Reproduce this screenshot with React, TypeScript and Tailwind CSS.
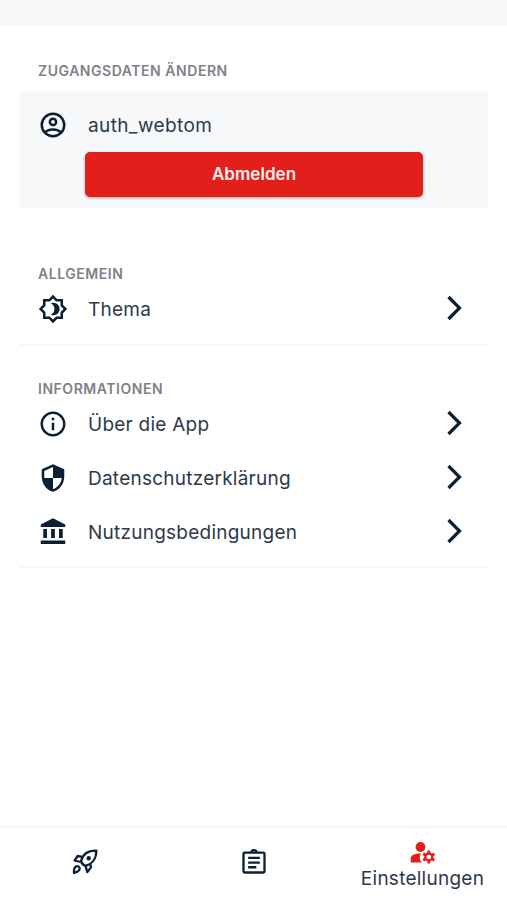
import type { ReactNode } from "react";
import { MdOutlineBrightness4, MdOutlineInfo, MdSecurity } from "react-icons/md";

function AccountIcon() {
  return (
    <svg viewBox="0 0 24 24" className="size-[30px]" fill="none" stroke="currentColor" strokeWidth="2">
      <circle cx="12" cy="12" r="9" />
      <circle cx="12" cy="9.5" r="2.5" />
      <path d="M5.8 18c1-1.6 3.4-2.5 6.2-2.5s5.2.9 6.2 2.5" />
    </svg>
  );
}

function BankIcon() {
  return (
    <svg viewBox="0 0 24 24" className="size-[30px]" fill="currentColor">
      <path d="M12 1 2.2 6v2h19.6V6zM4.200 9.500v7.200h3V9.500zm6.300 0v7.200h3V9.500zm6.300 0v7.200h3V9.500zM2.200 18.700v2.800h19.600v-2.800z" />
    </svg>
  );
}

function ChevronIcon() {
  return (
    <svg viewBox="0 0 17 26" className="h-[26px] w-[17px]" fill="none" stroke="currentColor" strokeWidth="3.200">
      <path d="M2.500 2l11 11-11 11" />
    </svg>
  );
}

function RocketIcon() {
  return (
    <svg viewBox="0 0 26 26" className="size-[26px]" fill="none" stroke="currentColor" strokeWidth="2.300" strokeLinejoin="round">
      <path d="M9 12.2C10.5 6 15.500 1.500 24.300 1.600c.2 8.200-4.500 13.500-10.600 15.300C11.500 16.400 9.800 14.800 9 12.200z" />
      <path d="M10.400 7.800 5.700 7 2.600 11.500 8.700 13M18.400 15.400l.7 2.700-3.800 5-1.800-6.200" />
      <path d="M2 24c-.2-3.200.3-6.500 3-6.800 2.200-.1 3.500 2.200 2.200 4C6.200 22.700 4.300 23.500 2 24z" />
      <circle cx="16.700" cy="9.300" r="2.200" fill="currentColor" stroke="none" />
    </svg>
  );
}

function ClipboardIcon() {
  return (
    <svg viewBox="0 0 24 24" className="size-7" fill="none" stroke="currentColor" strokeWidth="2">
      <rect x="3" y="4" width="18" height="17" rx="1" />
      <path d="M9.800 4a2.200 2.200 0 0 1 4.400 0M7 8.500h10M7 12.500h10M7 16.500h7" />
    </svg>
  );
}

function AccountCogIcon() {
  return (
    <svg viewBox="0 0 26 24" className="h-6 w-[26px]" fill="currentColor">
      <circle cx="10.500" cy="6" r="4.900" />
      <path d="M11 12.500C5 12.300.700 14.300.700 17.500V21.500h10.900a8 8 0 0 1-.6-9z" />
      <g fill="none" stroke="currentColor">
        <circle cx="18.800" cy="16" r="3.500" strokeWidth="2.300" />
        <path d="M18.800 9.500v2.500M18.800 20v2.500M13.170 12.750l2.170 1.250M22.260 18l2.170 1.250M13.170 19.250l2.170-1.250M22.260 14l2.170-1.250" strokeWidth="2.800" />
      </g>
    </svg>
  );
}

function Heading({ children }: { children: string }) {
  return <h2 className="pl-[18px] text-[14px] leading-[21px] font-semibold tracking-[0.54px] text-[#80818a]">{children}</h2>;
}

function Row({ icon, label }: { icon: ReactNode; label: string }) {
  return (
    <button className="flex h-[54px] w-full items-center pr-[25px] pl-[18px] text-left">
      <span className="flex w-[50px] shrink-0 text-[#0d1f33]">{icon}</span>
      <span className="flex-1 pt-[3px] text-[19px] tracking-[0.24px]">{label}</span>
      <span className="pb-[2px] text-[#0d1f33]">
        <ChevronIcon />
      </span>
    </button>
  );
}

const infoRows = [
  { label: "Über die App", icon: <MdOutlineInfo size={30} /> },
  { label: "Datenschutzerklärung", icon: <MdSecurity size={30} /> },
  { label: "Nutzungsbedingungen", icon: <BankIcon /> },
];

export default function App() {
  return (
    <div className="flex h-[900px] w-[507px] flex-col bg-white font-[Inter,sans-serif] text-[#2c3a4b]">
      <header className="h-[25px] shrink-0 bg-[#f6f8fa]" />

      <main className="flex-1 pr-[19px] pl-5">
        <section className="h-[206px] border-b border-[#fbfbfb] pt-[35px]">
          <Heading>ZUGANGSDATEN ÄNDERN</Heading>
          <div className="mt-[11px] h-[116px] bg-[#f6f8fa] pt-[18px]">
            <div className="flex h-[30px] items-center pl-[18px]">
              <span className="flex w-[50px] shrink-0 text-[#0d1f33]">
                <AccountIcon />
              </span>
              <span className="pt-[3px] text-[19px] tracking-[0.38px]">auth_webtom</span>
            </div>
            <button className="mt-3 ml-[65px] flex h-[45px] w-[338px] items-center justify-center rounded-[5px] bg-[#e21f1b] text-[17px] font-semibold tracking-[0.05px] text-[#fff0ef] shadow-[0_1px_3px_rgba(0,0,0,0.35)]">
              Abmelden
            </button>
          </div>
        </section>

        <section className="h-[115px] border-b-2 border-[#f8f8f9] pt-8">
          <Heading>ALLGEMEIN</Heading>
          <div className="-mt-0.5">
            <Row label="Thema" icon={<MdOutlineBrightness4 size={30} />} />
          </div>
        </section>

        <section className="h-[222px] border-b-2 border-[#f8f8f9] pt-8">
          <Heading>INFORMATIONEN</Heading>
          <div className="-mt-0.5">
            {infoRows.map((row) => (
              <Row key={row.label} {...row} />
            ))}
          </div>
        </section>
      </main>

      <nav className="grid h-[74px] shrink-0 grid-cols-3 border-t-2 border-[#f7f7f8] text-[#0d1f33]">
        <button className="flex items-center justify-center pb-1">
          <RocketIcon />
        </button>
        <button className="flex items-center justify-center pb-1">
          <ClipboardIcon />
        </button>
        <button className="flex flex-col items-center pt-[13px]">
          <span className="text-[#e21f1b]">
            <AccountCogIcon />
          </span>
          <span className="mt-0.5 text-[19px] leading-6 tracking-[0.25px] text-[#2c3a4b]">Einstellungen</span>
        </button>
      </nav>
    </div>
  );
}
